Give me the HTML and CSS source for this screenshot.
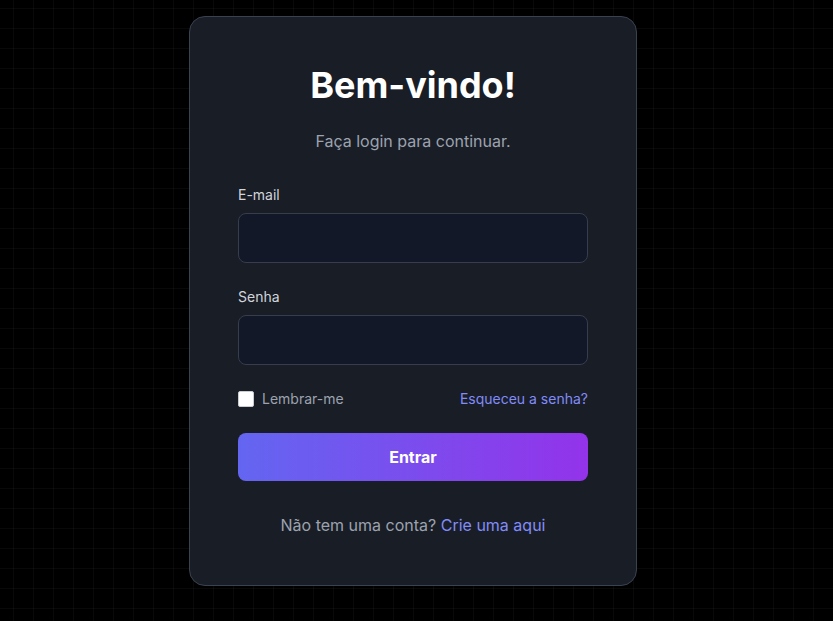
FILE: index.html
```html
<!DOCTYPE html>
<html lang="pt-BR">
<head>
<meta charset="utf-8">
<title>Login</title>
<link rel="stylesheet" href="styles.css">
</head>
<body>
<main class="page">
  <section class="card">
    <h1 class="title">Bem-vindo!</h1>
    <p class="subtitle">Faça login para continuar.</p>
    <form class="form">
      <div class="field">
        <label class="label" for="email">E-mail</label>
        <input class="input" id="email" type="email">
      </div>
      <div class="field">
        <label class="label" for="senha">Senha</label>
        <input class="input" id="senha" type="password">
      </div>
      <div class="row">
        <label class="remember"><input class="check" type="checkbox"><span>Lembrar-me</span></label>
        <a class="link" href="#">Esqueceu a senha?</a>
      </div>
      <button class="btn" type="button">Entrar</button>
    </form>
    <p class="footer">Não tem uma conta? <a class="link" href="#">Crie uma aqui</a></p>
  </section>
</main>
</body>
</html>
```
FILE: styles.css
```css
* { box-sizing: border-box; }
html, body { margin: 0; padding: 0; }
body {
  background-color: #000;
  background-image:
    linear-gradient(to right, rgba(255,255,255,0.035) 1px, transparent 1px),
    linear-gradient(to bottom, rgba(255,255,255,0.035) 1px, transparent 1px);
  background-size: 20px 20px;
  background-position: 13px 8px;
  font-family: Inter, "Noto Sans", sans-serif;
  min-height: 621px;
}
.page {
  display: flex;
  justify-content: center;
  padding: 16px 7px 0 0;
}
.card {
  width: 448px;
  background: #191d26;
  border: 1px solid #3a4150;
  border-radius: 16px;
  padding: 48px;
}
.title {
  margin: 0;
  font-size: 36px;
  line-height: 40px;
  font-weight: 700;
  color: #fff;
  text-align: center;
}
.subtitle {
  margin: 24px 0 0;
  font-size: 16px;
  line-height: 24px;
  color: #9ca3af;
  text-align: center;
}
.form {
  margin-top: 32px;
  display: flex;
  flex-direction: column;
  gap: 24px;
}
.field { display: flex; flex-direction: column; gap: 8px; }
.label {
  font-size: 14px;
  line-height: 20px;
  font-weight: 400;
  color: #d1d5db;
}
.input {
  height: 50px;
  width: 100%;
  background: #121827;
  border: 1px solid #373d4d;
  border-radius: 8px;
  padding: 12px;
  font: inherit;
  color: #fff;
  outline: none;
}
.row {
  display: flex;
  justify-content: space-between;
  align-items: center;
  height: 20px;
  font-size: 14px;
  line-height: 20px;
}
.remember {
  display: flex;
  align-items: center;
  gap: 8px;
  color: #9ca3af;
}
.check {
  appearance: none;
  margin: 0;
  width: 16px;
  height: 16px;
  background: #fff;
  border: 1px solid #c9ccd1;
  border-radius: 2px;
}
.link {
  color: #818cf8;
  text-decoration: none;
}
.btn {
  height: 48px;
  border: 0;
  border-radius: 8px;
  background: linear-gradient(to right, #6366f1, #9333ea);
  color: #fff;
  font: inherit;
  font-weight: 700;
  font-size: 16px;
}
.footer {
  margin: 32px 0 0;
  text-align: center;
  font-size: 16px;
  line-height: 24px;
  color: #9ca3af;
}
```
